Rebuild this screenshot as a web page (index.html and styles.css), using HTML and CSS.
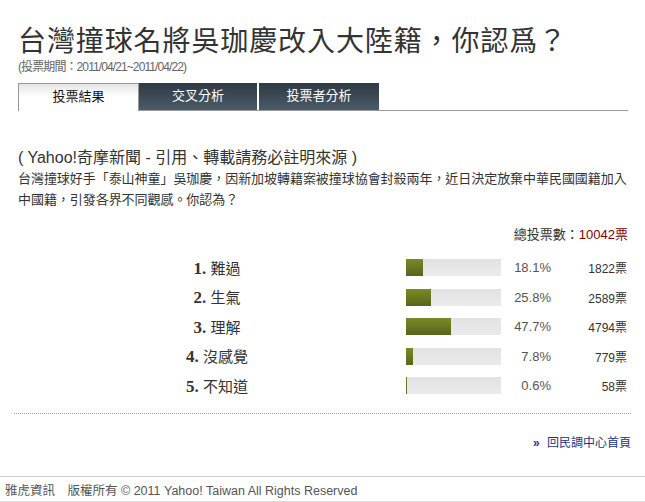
FILE: index.html
```html
<!DOCTYPE html>
<html lang="zh-Hant">
<head>
    <meta charset="UTF-8">
    <title>台灣撞球名將吳珈慶改入大陸籍，你認爲？</title>
    <link rel="stylesheet" href="styles.css">
</head>
<body>
    <div id="poll">
        <h1 class="poll-title">台灣撞球名將吳珈慶改入大陸籍，你認爲？</h1>
        <div class="period">(投票期間：2011/04/21~2011/04/22)</div>
        <div class="tabs">
            <div class="tab active">投票結果</div>
            <div class="tab">交叉分析</div>
            <div class="tab tab-last">投票者分析</div>
        </div>
        <div class="source">( Yahoo!奇摩新聞 - 引用、轉載請務必註明來源 )</div>
        <p class="desc">台灣撞球好手「泰山神童」吳珈慶，因新加坡轉籍案被撞球協會封殺兩年，近日決定放棄中華民國國籍加入中國籍，引發各界不同觀感。你認為？</p>
        <div class="total">總投票數：<span class="total-num">10042票</span></div>
        <div class="results">
            <div class="row">
                <div class="label"><b>1.</b> 難過</div>
                <div class="bar"><div class="fill" style="width: 18.1%"></div></div>
                <div class="pct">18.1%</div>
                <div class="votes">1822票</div>
            </div>
            <div class="row">
                <div class="label"><b>2.</b> 生氣</div>
                <div class="bar"><div class="fill" style="width: 25.8%"></div></div>
                <div class="pct">25.8%</div>
                <div class="votes">2589票</div>
            </div>
            <div class="row">
                <div class="label"><b>3.</b> 理解</div>
                <div class="bar"><div class="fill" style="width: 47.7%"></div></div>
                <div class="pct">47.7%</div>
                <div class="votes">4794票</div>
            </div>
            <div class="row">
                <div class="label"><b>4.</b> 沒感覺</div>
                <div class="bar"><div class="fill" style="width: 7.8%"></div></div>
                <div class="pct">7.8%</div>
                <div class="votes">779票</div>
            </div>
            <div class="row">
                <div class="label"><b>5.</b> 不知道</div>
                <div class="bar"><div class="fill" style="width: 0.6%"></div></div>
                <div class="pct">0.6%</div>
                <div class="votes">58票</div>
            </div>
        </div>
        <div class="dots"></div>
        <div class="back"><a href="#"><span class="raquo">»</span> 回民調中心首頁</a></div>
    </div>
    <div id="footer">雅虎資訊　版權所有 © 2011 Yahoo! Taiwan All Rights Reserved</div>
</body>
</html>
```

FILE: styles.css
```css
body {
    margin: 0;
    padding: 0;
    background: #fff;
    color: #333;
    font-family: "Liberation Sans", "Noto Sans CJK TC", sans-serif;
    font-size: 12px;
    overflow: hidden;
}
#poll {
    padding: 0 17px 0 18px;
}
.poll-title {
    margin: 26px 0 0;
    font-size: 28px;
    line-height: 32px;
    font-weight: normal;
    color: #333;
    font-family: "Liberation Serif", "Noto Sans CJK TC", serif;
    letter-spacing: 0.9px;
}
.period {
    margin-top: 2px;
    line-height: 14px;
    color: #666;
    letter-spacing: -0.9px;
}
.tabs {
    display: flex;
    margin-top: 9px;
    height: 27px;
    border-bottom: 1px solid #999;
}
.tab {
    box-sizing: border-box;
    width: 119px;
    height: 27px;
    line-height: 26px;
    text-align: center;
    font-size: 13px;
    color: #fff;
    background: linear-gradient(#2e3a44, #4b5b67);
    border-right: 1px solid #fff;
}
.tab.active {
    width: 121px;
    height: 28px;
    color: #111;
    background: linear-gradient(#e4e4e4, #fff 45%);
    border: 1px solid #999;
    border-bottom: none;
}
.tab-last {
    width: 120px;
    margin-left: 1px;
    border-right: none;
}
.source {
    margin-top: 37px;
    font-size: 16px;
    line-height: 20px;
    color: #333;
}
.desc {
    margin: 0 -2px 0 0;
    font-size: 13px;
    line-height: 21px;
    letter-spacing: -0.05px;
    color: #333;
}
.total {
    margin-top: 17px;
    text-align: right;
    font-size: 13px;
    line-height: 16px;
}
.total-num {
    color: #800000;
}
.results {
    margin-top: 10px;
}
.row {
    display: grid;
    grid-template-columns: 129px 140px 119px 95px 50px 76px;
    align-items: center;
    height: 29.5px;
}
.label {
    grid-column: 2;
    text-align: center;
    font-size: 15px;
    color: #333;
}
.label b {
    font-family: "Liberation Serif", serif;
    font-size: 17px;
    color: #333;
}
.bar {
    grid-column: 4;
    height: 17px;
    background: linear-gradient(#e2e2e2, #ebebeb);
}
.fill {
    height: 100%;
    background: linear-gradient(#7a8a28, #56661a);
}
.pct {
    grid-column: 5;
    text-align: right;
    color: #555;
    font-size: 13px;
}
.votes {
    grid-column: 6;
    text-align: right;
    color: #333;
}
.dots {
    margin: 12px -3px 0 -4px;
    border-top: 1px dotted #999;
}
.back {
    margin: 19px -3px 0 0;
    text-align: right;
}
.back a {
    color: #1b3686;
    text-decoration: none;
}
.raquo {
    font-weight: bold;
    margin-right: 4px;
}
#footer {
    margin-top: 26px;
    border-top: 1px solid #ccc;
    border-bottom: 1px solid #ddd;
    padding: 6px 0 2px 5px;
    font-size: 12.5px;
    line-height: 16px;
    color: #555;
}
```
